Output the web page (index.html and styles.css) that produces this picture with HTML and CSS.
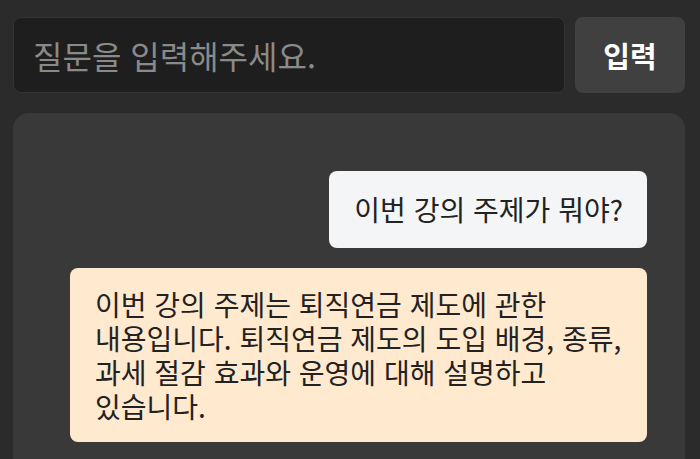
FILE: index.html
```html
<!DOCTYPE html>
<html lang="ko">
<head>
<meta charset="utf-8">
<link rel="stylesheet" href="styles.css">
</head>
<body>
<div class="page">
  <form class="ask">
    <input class="ask-input" type="text" placeholder="질문을 입력해주세요.">
    <button class="ask-btn" type="button">입력</button>
  </form>
  <section class="chat">
    <div class="msg user">이번 강의 주제가 뭐야?</div>
    <div class="msg bot">이번 강의 주제는 퇴직연금 제도에 관한 내용입니다. 퇴직연금 제도의 도입 배경, 종류, 과세 절감 효과와 운영에 대해 설명하고 있습니다.</div>
  </section>
</div>
</body>
</html>
```
FILE: styles.css
```css
html, body {
  margin: 0;
  height: 100%;
  background: #2b2b2b;
  overflow: hidden;
}
body {
  font-family: "Noto Sans CJK KR", "Noto Sans", sans-serif;
}
.page {
  padding: 17px 15px 0 13px;
  display: flex;
  flex-direction: column;
  gap: 20px;
}
.ask {
  display: flex;
  gap: 10px;
  height: 76px;
  margin: 0;
}
.ask-input {
  flex: 1;
  box-sizing: border-box;
  background: #1e1e1e;
  border: 1px solid #333;
  border-radius: 8px;
  padding: 0 19px;
  font-family: inherit;
  font-size: 32px;
  color: #ddd;
  outline: none;
}
.ask-input::placeholder {
  color: #8a8a8a;
}
.ask-btn {
  width: 110px;
  border: none;
  border-radius: 8px;
  background: #404040;
  color: #fff;
  font-family: inherit;
  font-size: 29px;
  font-weight: 600;
}
.chat {
  background: #393939;
  border-radius: 16px;
  height: 400px;
  padding: 58px 38px 0 57px;
  display: flex;
  flex-direction: column;
  gap: 20px;
}
.msg {
  font-size: 28px;
  line-height: 34px;
  color: #222;
  border-radius: 8px;
  padding: 0 24px 0 25px;
  word-break: keep-all;
}
.user {
  align-self: flex-end;
  background: #f4f5f7;
  padding-top: 21px;
  padding-bottom: 22px;
}
.bot {
  align-self: stretch;
  background: #ffe9cf;
  padding-top: 19px;
  padding-bottom: 19px;
}
```
